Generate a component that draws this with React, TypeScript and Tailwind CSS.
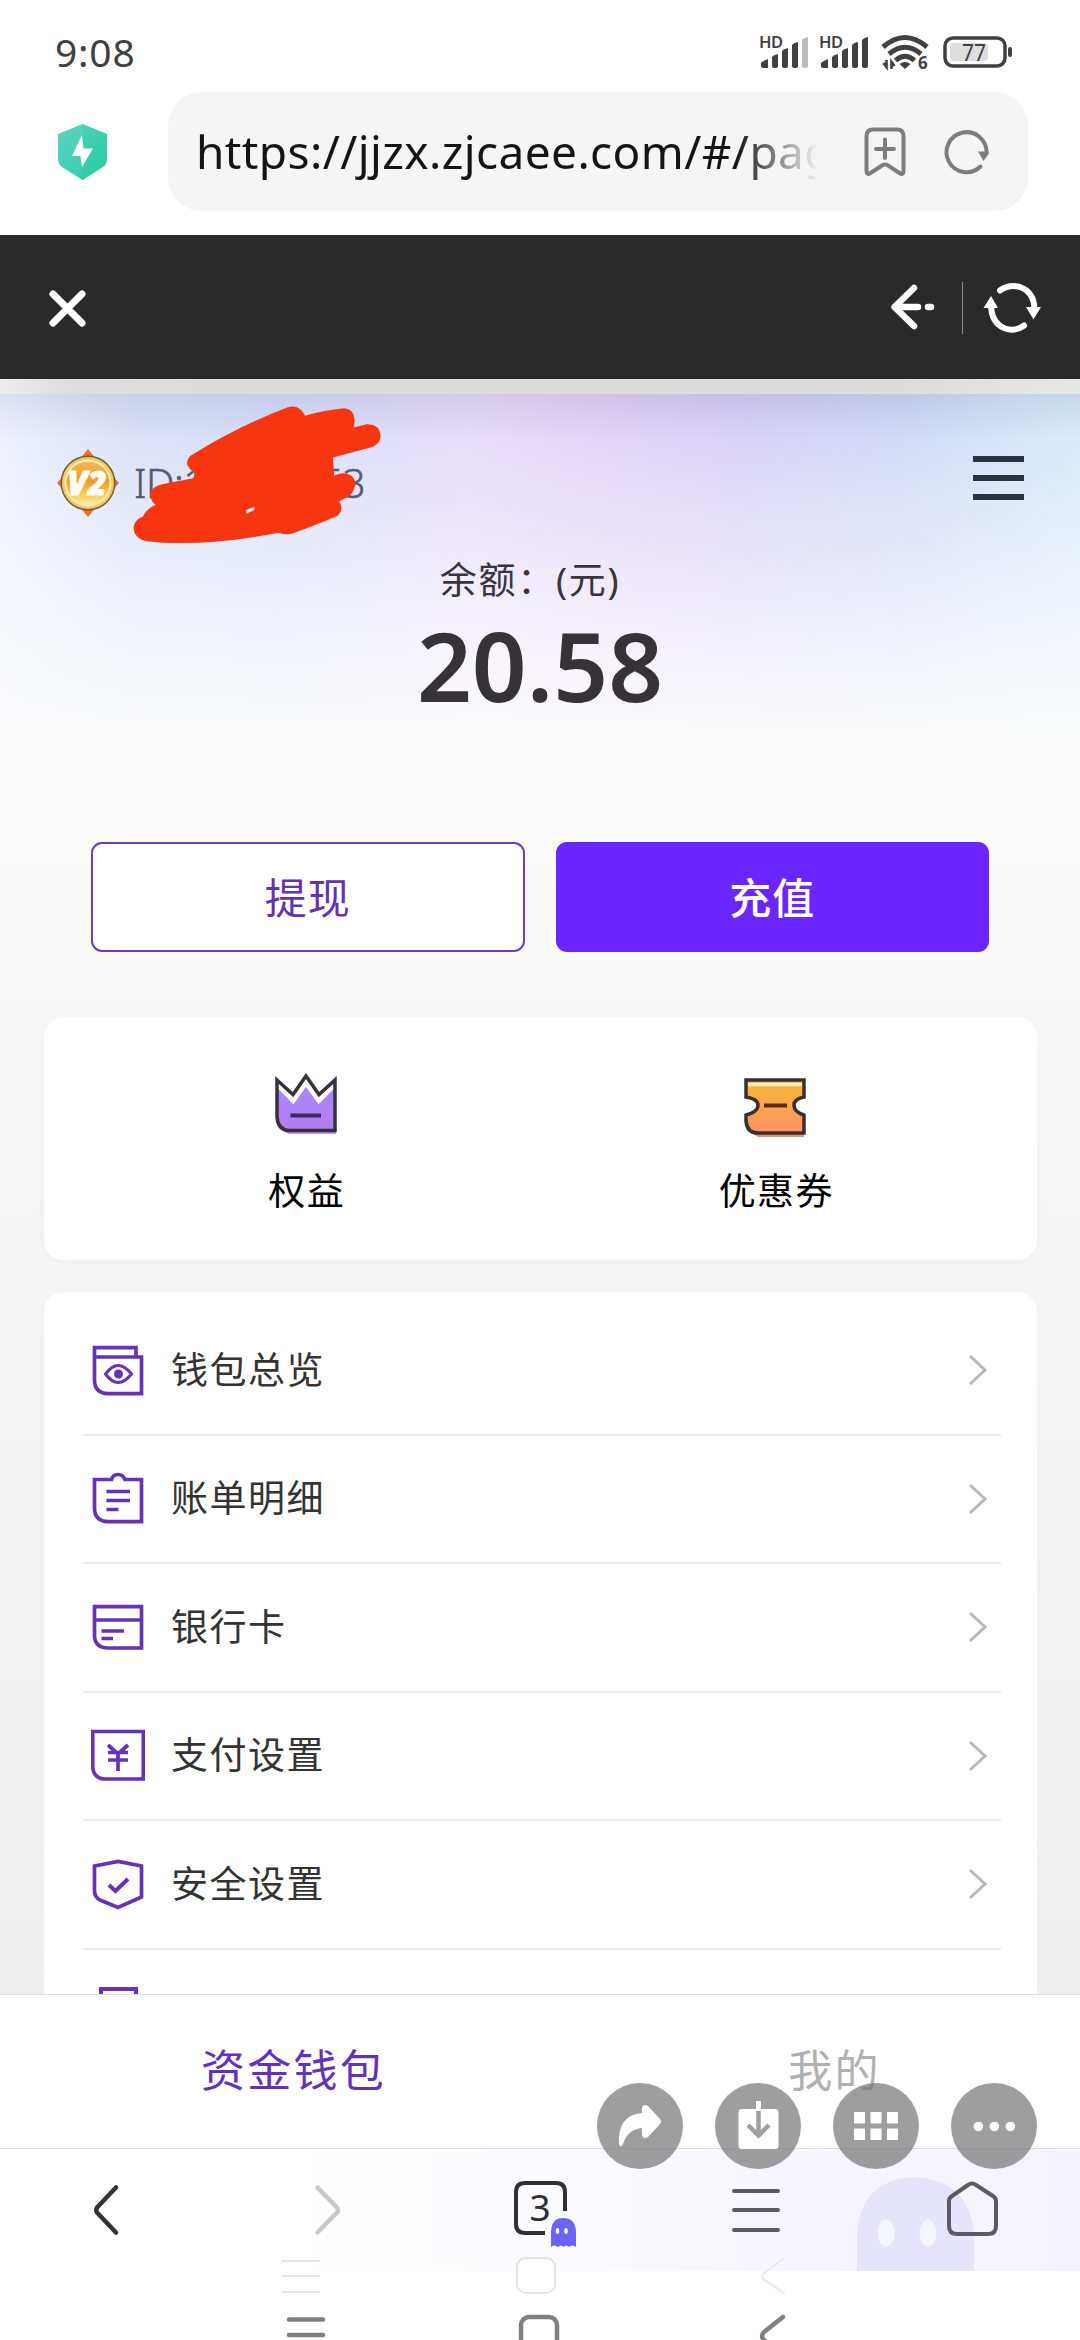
import type { ReactNode } from 'react';

const P = '#6633b8';

function HdSignal({ weak }: { weak?: boolean }) {
  return (
    <svg className="overflow-visible" width="50" height="36" viewBox="0 0 50 36" fill="#414141">
      <text x="0" y="14" fontFamily="Noto Sans" fontWeight="600" fontSize="16.5" textLength="24">HD</text>
      <path d="M2 32 V29 Q4 27 9 25 V34 H4 Q2 34 2 32Z" />
      <path d="M13 32 V23 Q15 21 19 20 V32 Q19 34 17 34 H15 Q13 34 13 32Z" />
      <path d="M23 32 V17 Q25 15 29 14 V32 Q29 34 27 34 H25 Q23 34 23 32Z" />
      <path d="M33 32 V11 Q35 8.500 39 8 V32 Q39 34 37 34 H35 Q33 34 33 32Z" />
      <path d="M43 32 V6 Q45 3.500 49 3 V32 Q49 34 47 34 H45 Q43 34 43 32Z" fill={weak ? '#bbbbbb' : '#414141'} />
    </svg>
  );
}

function StatusBar() {
  return (
    <div className="flex h-[92px] items-start justify-between pl-[55px] pr-[67px] pt-[34px]">
      <div className="-mt-[1px] text-[39px] leading-[38px] tracking-[0.8px] text-[#404040]">9:08</div>
      <div className="flex items-start">
        <HdSignal weak />
        <div className="ml-[10px]"><HdSignal /></div>
        <svg className="ml-[12px] overflow-visible" width="48" height="38" viewBox="0 0 48 38" fill="none" stroke="#414141">
          <path d="M2 13 Q24 -6 46 13" strokeWidth="5" />
          <path d="M8 20 Q24 6.500 40 20" strokeWidth="5" />
          <path d="M14.500 26.500 Q24 18 33.500 26.500" strokeWidth="5" />
          <path d="M18.500 30 Q24 26 29.500 30 L24 35Z" fill="#414141" stroke="none" />
          <path d="M2.500 29 L5.500 33 V26 M10.500 35 V28 L13.500 32" strokeWidth="2.600" />
          <text x="37" y="35" fontFamily="Noto Sans" fontWeight="700" fontSize="17" fill="#414141" stroke="none">6</text>
        </svg>
        <svg className="ml-[14px] mt-[2px] overflow-visible" width="70" height="33" viewBox="0 0 70 33" fill="none">
          <rect x="2" y="2" width="60" height="28" rx="8" stroke="#414141" strokeWidth="3.500" />
          <rect x="7" y="7" width="38" height="18" rx="4" fill="#dedede" />
          <rect x="65" y="11" width="4" height="10" rx="2" fill="#414141" />
          <text x="19" y="24.500" fontFamily="Noto Sans" fontSize="24" fill="#414141" textLength="24" lengthAdjust="spacingAndGlyphs">77</text>
        </svg>
      </div>
    </div>
  );
}

function AddressBar() {
  return (
    <div className="flex h-[143px] items-start pl-[57px]">
      <svg className="mt-[31px]" width="51" height="58" viewBox="0 0 51 58">
        <defs>
          <linearGradient id="shield" x1="0" y1="0" x2="0.600" y2="1">
            <stop offset="0" stopColor="#60d3c2" />
            <stop offset="1" stopColor="#33cfaa" />
          </linearGradient>
        </defs>
        <path d="M25.500 1 L50 11 V36 Q50 41 46 44 L25.500 57 L5 44 Q1 41 1 36 V11Z" fill="url(#shield)" />
        <path d="M25.500 1 L50 11 V36 Q50 41 46 44 L25.500 57Z" fill="#19c29b" opacity="0.200" />
        <path d="M25 12 L15 33 H23.500 L25 44 L36 25.500 H26.500Z" fill="#fff" />
      </svg>
      <div className="ml-[60px] flex h-[119px] w-[860px] items-center rounded-[34px] bg-[#f5f5f5] pl-[28px]">
        <div className="-mt-[2px] w-[620px] overflow-hidden whitespace-nowrap text-[46px] leading-[64px] tracking-[0.400px] text-[#141414] [mask-image:linear-gradient(to_right,#000_540px,transparent_622px)]">
          https://jjzx.zjcaee.com/#/pages
        </div>
        <svg className="ml-[48px] overflow-visible" width="42" height="50" viewBox="0 0 42 50" fill="none" stroke="#7d7d7d" strokeWidth="4" strokeLinecap="round" strokeLinejoin="round">
          <path d="M2.500 44 V9 Q2.500 2.500 9 2.500 H33 Q39.500 2.500 39.500 9 V44 Q39.500 48.500 35.500 46 L24 38.500 Q21 36.500 18 38.500 L6.500 46 Q2.500 48.500 2.500 44Z" />
          <path d="M21 12.500 V31 M12 22 H30" />
        </svg>
        <svg className="-mt-[2px] ml-[38px] overflow-visible" width="46" height="46" viewBox="0 0 46 46" fill="none">
          <path d="M36.500 38.500 A20 20 0 1 1 42.500 25" stroke="#7d7d7d" strokeWidth="4" strokeLinecap="round" />
          <path d="M34 23.500 H44.500 V26 L39.500 33Z" fill="#7d7d7d" />
        </svg>
      </div>
    </div>
  );
}

function DarkBar() {
  return (
    <div className="flex h-[144px] items-center bg-[#2a2a2a] pl-[49px] pr-[39px]">
      <svg className="mt-[3px]" width="37" height="37" viewBox="0 0 37 37" stroke="#fff" strokeWidth="7" strokeLinecap="round">
        <path d="M4 4 L33 33 M33 4 L4 33" />
      </svg>
      <svg className="ml-auto" width="45" height="46" viewBox="0 0 45 46" stroke="#fff" strokeWidth="6.500" strokeLinecap="round" strokeLinejoin="round" fill="none">
        <path d="M24 4 L4.500 23 L24 42 M5 23 H28 M38 23 H41" />
      </svg>
      <div className="ml-[27px] mt-[2px] h-[52px] w-px bg-[#8a8a8a]" />
      <svg className="ml-[20px] mt-[1px]" width="58" height="52" viewBox="0 0 58 52" fill="none" stroke="#fff" strokeWidth="6" strokeLinecap="round">
        <path d="M17 8.500 Q26 2 37 5 Q51 10 51.500 27" />
        <path d="M41 43.500 Q32 50 22 46.500 Q8 41 8 22" />
        <path d="M43 25 H58 L50.500 37.500Z M0.500 26 H15 L8 14Z" fill="#fff" stroke="none" />
      </svg>
    </div>
  );
}

function Badge() {
  return (
    <svg width="64" height="70" viewBox="0 0 64 70">
      <defs>
        <linearGradient id="gold" x1="0" y1="0" x2="0" y2="1">
          <stop offset="0" stopColor="#f5b84e" />
          <stop offset="0.450" stopColor="#f09a2c" />
          <stop offset="0.800" stopColor="#ffcf58" />
          <stop offset="1" stopColor="#ffe9a8" />
        </linearGradient>
      </defs>
      <path d="M32 1 L41 12 L55 26 L63 35 L55 44 L41 58 L32 69 L23 58 L9 44 L1 35 L9 26 L23 12Z" fill="#e8702a" />
      <circle cx="32" cy="35" r="27.500" fill="#6b6038" />
      <circle cx="32" cy="35" r="26" fill="#fbc765" />
      <circle cx="32" cy="35" r="23.500" fill="#fff0b8" />
      <circle cx="32" cy="35" r="21.500" fill="url(#gold)" />
      <text x="31" y="47" textAnchor="middle" fontFamily="Noto Sans" fontWeight="900" fontStyle="italic" fontSize="33" fill="#fffdf6" stroke="#fffdf6" strokeWidth="1">V2</text>
    </svg>
  );
}

function Scribble() {
  return (
    <svg className="absolute -left-[3px] -top-[52px]" width="255" height="143" viewBox="380 100 740 430" preserveAspectRatio="none">
      <path
        fillRule="evenodd"
        fill="#f73511"
        d="M560 254 Q690 170 835 113 Q868 103 885 138 Q950 120 1000 116 Q1038 122 1026 174 L1064 164 Q1106 164 1104 205 Q1100 224 1080 232 L966 264 L970 318 Q1002 304 1022 320 Q1042 344 1016 378 L984 396 Q1000 420 978 440 Q920 466 850 492 Q830 498 808 490 Q640 524 500 521 Q440 520 412 512 Q384 496 388 470 Q394 448 414 442 Q426 416 452 406 Q432 392 438 366 Q446 350 470 344 L560 326 L568 312 Q546 298 542 282 Q544 262 560 254Z M714 422 L738 412 V422 L714 433Z"
      />
    </svg>
  );
}

function Crown() {
  return (
    <svg width="62" height="66" viewBox="0 0 62 66">
      <defs>
        <linearGradient id="crown" x1="0" y1="0" x2="0" y2="1">
          <stop offset="0" stopColor="#a58af8" />
          <stop offset="1" stopColor="#b47cf0" />
        </linearGradient>
      </defs>
      <path d="M8 58 H61 V61 H14Z" fill="#b69be8" />
      <path d="M2 13 L18 28 L31 9 L44 28 L60 13 V57 H14 Q3 57 2 43Z" fill="url(#crown)" />
      <path d="M3 10 L18 25 L31 7 L44 25 L59 10" fill="none" stroke="#fff" strokeWidth="8" />
      <path d="M2 7 L18 21.500 L31 3 L44 21.500 L60 7 V57.500 H14 Q3 57 2 44Z" fill="none" stroke="#35313f" strokeWidth="3.500" />
      <path d="M15.500 42.500 H46" stroke="#402a66" strokeWidth="4" />
    </svg>
  );
}

function Ticket() {
  return (
    <svg width="62" height="62" viewBox="0 0 62 62">
      <defs>
        <linearGradient id="ticket" x1="0" y1="0" x2="0" y2="1">
          <stop offset="0.200" stopColor="#fbb13d" />
          <stop offset="1" stopColor="#ff9068" />
        </linearGradient>
      </defs>
      <path d="M8 56 H60 V60 H14Z" fill="#d9967c" />
      <path d="M2 3 H60 V20 Q50 22 50 28 Q50 35 60 38 V56 H14 Q3 56 2 44 V38 Q14 35 14 28 Q14 22 2 20Z" fill="url(#ticket)" />
      <path d="M4 7.500 H58" stroke="#fff3c8" strokeWidth="3.500" />
      <path d="M2 3 H60 V20 Q50 22 50 28 Q50 35 60 38 V56 H14 Q3 56 2 44 V38 Q14 35 14 28 Q14 22 2 20Z" fill="none" stroke="#38302e" strokeWidth="3.500" />
      <path d="M20 28.500 H43" stroke="#5b2c15" strokeWidth="4" />
    </svg>
  );
}

const icons: Record<string, ReactNode> = {
  wallet: (
    <>
      <path d="M3.500 13 V3.700 H45 V12.500 M3.500 13 H50.500 V49.700 H17 Q3.500 49 3.500 36Z" />
      <path d="M14.500 30 Q27 13 40.500 30 Q27 47 14.500 30Z" strokeWidth="3" />
      <circle cx="27.500" cy="30" r="4.500" fill={P} stroke="none" />
    </>
  ),
  bill: (
    <>
      <path d="M3.500 7.500 H20.500 Q22 2.500 27 2.500 Q32 2.500 34 7.500 H50.500 V49.700 H17 Q3.500 49 3.500 36Z" />
      <path d="M15.500 19.500 H39 M15.500 28.500 H39 M15.500 37.500 H27.500" />
    </>
  ),
  card: (
    <>
      <path d="M3.500 5.700 H50.500 V47 H17 Q3.500 47 3.500 34Z M3.500 19 H50.500" />
      <path d="M10.500 30 H33 M10.500 37.500 H22" />
    </>
  ),
  pay: (
    <>
      <path d="M1.700 2.500 H52.300 V50 H15 Q1.700 50 1.700 37Z" />
      <path d="M17 16 L27 25 L37 16 M27 24 V42 M17 23.500 H37 M17 31 H37" />
    </>
  ),
  safe: (
    <>
      <path d="M3.500 8 L27 3.500 L50.500 8 V39 L27 49.500 L9 42 Q3.500 39 3.500 33Z" />
      <path d="M18 27 L24.500 33 L37 21" strokeWidth="4" />
    </>
  ),
};

const rows = [
  ['wallet', '钱包总览'],
  ['bill', '账单明细'],
  ['card', '银行卡'],
  ['pay', '支付设置'],
  ['safe', '安全设置'],
];

function Row({ icon, label }: { icon: string; label: string }) {
  return (
    <div className="ml-[39px] mr-[36px] flex h-[128.500px] items-center border-b-2 border-[#ebebeb] pl-[8px] pr-[13px]">
      <svg className="mt-[1px]" width="54" height="54" viewBox="0 0 54 54" fill="none" stroke={P} strokeWidth="3.700">
        {icons[icon]}
      </svg>
      <div className="ml-[26px] -mt-[1px] text-[37px] leading-[50px] tracking-[1.500px] text-[#333]">{label}</div>
      <svg className="ml-auto" width="20" height="32" viewBox="0 0 20 32" fill="none" stroke="#b8b8b8" strokeWidth="3">
        <path d="M2 2 L17 16 L2 30" />
      </svg>
    </div>
  );
}

function WalletPage() {
  return (
    <div className="flex h-[1615px] flex-col overflow-hidden bg-[linear-gradient(to_bottom,#ffffff00_0px,#fcfcfc9c_200px,#fcfcfc_365px,#fafafa_500px,#f5f5f5_850px,#efefef_1615px),linear-gradient(to_right,#ebeeff_0px,#d5dcf8_130px,#d0d8fa_280px,#e2d6fa_470px,#ddcdf8_600px,#d2caf8_740px,#cad3f7_900px,#d4e6fa_1080px)]">
      <div className="h-[15px] shrink-0 bg-[linear-gradient(to_right,#eeeeee,#dfdfdf_60px,#dcdcdc_200px,#dcdcdc_900px,#e6e8e6)]" />
      <div className="flex h-[160px] shrink-0 items-start bg-[linear-gradient(to_bottom,#00000010,#00000000_45px)] pl-[56px] pr-[56px] pt-[54px]">
        <Badge />
        <div className="relative ml-[14px] mt-[7px] flex h-[56px] w-[231px] items-center justify-between text-[40px] font-light tracking-[-0.500px] text-[#555b72] [-webkit-text-stroke:0.500px_#555b72]">
          <span>ID:1</span>
          <span>53</span>
          <Scribble />
        </div>
        <div className="ml-auto mt-[8px] flex w-[51px] flex-col gap-[13.500px]">
          <div className="h-[5.500px] bg-[#2b3241]" />
          <div className="h-[5.500px] bg-[#2b3241]" />
          <div className="h-[5.500px] bg-[#2b3241]" />
        </div>
      </div>
      <div className="shrink-0 pr-[20px] text-center text-[37px] leading-[52px] tracking-[1.700px] text-[#38353f]">余额：(元)</div>
      <div className="mt-[4px] shrink-0 text-center font-['Noto_Sans'] text-[96px] font-semibold leading-[110px] text-[#353337]">20.58</div>
      <div className="mt-[122px] flex shrink-0 gap-[31px] px-[91px]">
        <div className="flex h-[110px] w-[434px] items-center justify-center rounded-[11px] border-2 border-[#6a3fb5] bg-white text-[42px] tracking-[1px] text-[#6432b0]">提现</div>
        <div className="flex h-[110px] w-[434px] items-center justify-center rounded-[11px] bg-[#6b25ff] text-[42px] font-medium tracking-[1px] text-white">充值</div>
      </div>
      <div className="ml-[44px] mr-[43px] mt-[65px] flex h-[243px] shrink-0 rounded-[20px] bg-white px-[27px] text-[37px] tracking-[1.400px] text-black shadow-[0_2px_12px_rgba(0,0,0,0.02)]">
        <div className="flex flex-1 flex-col items-center pt-[56px]">
          <Crown />
          <div className="mt-[25px] pl-[2px] leading-[54px]">权益</div>
        </div>
        <div className="flex flex-1 flex-col items-center pt-[60px]">
          <Ticket />
          <div className="mt-[25px] pl-[2px] leading-[54px]">优惠券</div>
        </div>
      </div>
      <div className="ml-[44px] mr-[43px] mt-[32px] h-[900px] shrink-0 rounded-t-[20px] bg-white pt-[15px]">
        {rows.map(([icon, label]) => (
          <Row key={icon} icon={icon} label={label} />
        ))}
        <svg className="ml-[55px] mt-[37px]" width="40" height="50" viewBox="0 0 40 50" fill="none" stroke={P} strokeWidth="4">
          <rect x="2" y="2" width="35" height="46" />
        </svg>
      </div>
    </div>
  );
}

function Circle({ children }: { children: ReactNode }) {
  return (
    <svg width="86" height="86" viewBox="0 0 86 86">
      <circle cx="43" cy="43" r="43" fill="#757575" fillOpacity="0.700" />
      {children}
    </svg>
  );
}

function FloatingActions() {
  return (
    <div className="absolute left-[597px] top-[2083px] flex gap-[32px]">
      <Circle>
        <path d="M22 62 Q20 32 45 30 V25 Q46 20 51 23 L63 36 Q65 39 63 41 L51 54 Q46 57 45 52 V45 Q31 46 26 61 Q24 65 22 62Z" fill="#fff" />
      </Circle>
      <Circle>
        <path d="M27 26 H60 Q63.500 26 63.500 29 V63 Q63.500 66 60 66 H27 Q23.500 66 23.500 63 V29 Q23.500 26 27 26Z" fill="#fff" />
        <path d="M43.500 18 V28" stroke="#fff" strokeWidth="5" />
        <path d="M43.500 28 V52 M33 42 L43.500 52.500 L54 42" stroke="#9f9f9f" strokeWidth="4.500" fill="none" />
      </Circle>
      <Circle>
        <path d="M21 29 h11 v11.500 h-11z M37.500 29 h11 v11.500 h-11z M54 29 h11 v11.500 h-11z M21 45.500 h11 v11.500 h-11z M37.500 45.500 h11 v11.500 h-11z M54 45.500 h11 v11.500 h-11z" fill="#fff" />
      </Circle>
      <Circle>
        <path d="M22.500 43.500 a4.800 4.800 0 1 0 9.600 0 a4.800 4.800 0 1 0 -9.600 0 M38.500 43.500 a4.800 4.800 0 1 0 9.600 0 a4.800 4.800 0 1 0 -9.600 0 M54.500 43.500 a4.800 4.800 0 1 0 9.600 0 a4.800 4.800 0 1 0 -9.600 0" fill="#fff" />
      </Circle>
    </div>
  );
}

function BrowserNav() {
  return (
    <div className="relative flex h-[122px] items-center bg-[linear-gradient(to_right,#ffffff_280px,#fcfcff_480px,#f9f8ff_700px,#f5f4ff_900px,#f4f3ff)] pl-[92px]">
      <svg className="absolute bottom-0 left-[857px]" width="117" height="94" viewBox="0 0 117 94">
        <path d="M0 94 V57 Q4 2 58 0 Q112 3 117 57 V94Z" fill="#e7e5fd" />
        <ellipse cx="29" cy="56" rx="8.500" ry="13.500" fill="#f3f5ff" />
        <ellipse cx="71" cy="56" rx="8.500" ry="13.500" fill="#f3f5ff" />
      </svg>
      <svg width="30" height="52" viewBox="0 0 30 52" fill="none" stroke="#333" strokeWidth="4.500" strokeLinecap="round" strokeLinejoin="round">
        <path d="M24 3.500 L5 23.500 Q3.500 26 5 28.500 L24 48.500" />
      </svg>
      <svg className="ml-[191px]" width="30" height="52" viewBox="0 0 30 52" fill="none" stroke="#c8c8c8" strokeWidth="4.500" strokeLinecap="round" strokeLinejoin="round">
        <path d="M4.500 3.500 L24 23.500 Q26 26 24 28.500 L4.500 48.500" />
      </svg>
      <svg className="ml-[170px] mt-[8px]" width="64" height="68" viewBox="0 0 64 68" fill="none">
        <path d="M52 31 V12 Q52 3 43 3 H12 Q3 3 3 12 V44 Q3 53 12 53 H32" stroke="#2f2f35" strokeWidth="4" />
        <text x="27" y="41" textAnchor="middle" fontFamily="Noto Sans" fontSize="37" fill="#2f2f35">3</text>
        <path d="M38 67 V51 Q39 38 50 38 Q62 38 63 51 V67 Q59 64 56 67 Q53 64 50.500 67 Q48 64 45 67 Q41 64 38 67Z" fill="#6c63f8" />
        <ellipse cx="44.500" cy="51" rx="1.800" ry="3" fill="#fff" />
        <ellipse cx="53" cy="51" rx="1.800" ry="3" fill="#fff" />
      </svg>
      <div className="ml-[155px] flex w-[48px] flex-col gap-[15.500px]">
        <div className="h-[4px] rounded-full bg-[#5d5964]" />
        <div className="h-[4px] rounded-full bg-[#5d5964]" />
        <div className="h-[4px] rounded-full bg-[#5d5964]" />
      </div>
      <svg className="relative -mt-[2px] ml-[165px]" width="54" height="56" viewBox="0 0 54 56" fill="none" stroke="#5d5964" strokeWidth="4" strokeLinejoin="round">
        <path d="M4 20 Q4 17 7 15 L23 4 Q27 1 31 4 L48 15 Q51 17 51 20 V45 Q51 53 43 53 H12 Q4 53 4 45Z" />
      </svg>
    </div>
  );
}

function SystemNav() {
  return (
    <svg className="absolute left-0 top-[2250px]" width="1080" height="90" viewBox="0 0 1080 90" fill="none" strokeLinecap="round" strokeLinejoin="round">
      <g stroke="#e4e4e6" strokeWidth="2">
        <path d="M282 11 H319 M282 26 H319 M282 42 H319" />
        <rect x="517" y="8" width="38" height="35" rx="9" fill="#fff" />
        <path d="M784 8 L763 24 Q760 26 763 29 L784 43" stroke="#e9e9ec" />
      </g>
      <g stroke="#808080" strokeWidth="4.500">
        <path d="M289 69.500 H323 M289 85 H323" />
        <rect x="521" y="67" width="36" height="36" rx="8" />
        <path d="M783 67 L764 82 Q760 86 764 90 L783 105" />
      </g>
    </svg>
  );
}

export default function App() {
  return (
    <div className="relative h-[2340px] w-[1080px] overflow-hidden bg-white font-['Noto_Sans','Noto_Sans_CJK_SC',sans-serif]">
      <StatusBar />
      <AddressBar />
      <DarkBar />
      <WalletPage />
      <div className="flex h-[155px] items-center border-y border-[#dcdfdf] bg-white pb-[3px] text-[44px] tracking-[2.200px]">
        <div className="flex-1 pl-[48px] text-center text-[#6432b8]">资金钱包</div>
        <div className="flex-1 pl-[50px] text-center text-[#b0b0b0]">我的</div>
      </div>
      <BrowserNav />
      <SystemNav />
      <FloatingActions />
    </div>
  );
}
